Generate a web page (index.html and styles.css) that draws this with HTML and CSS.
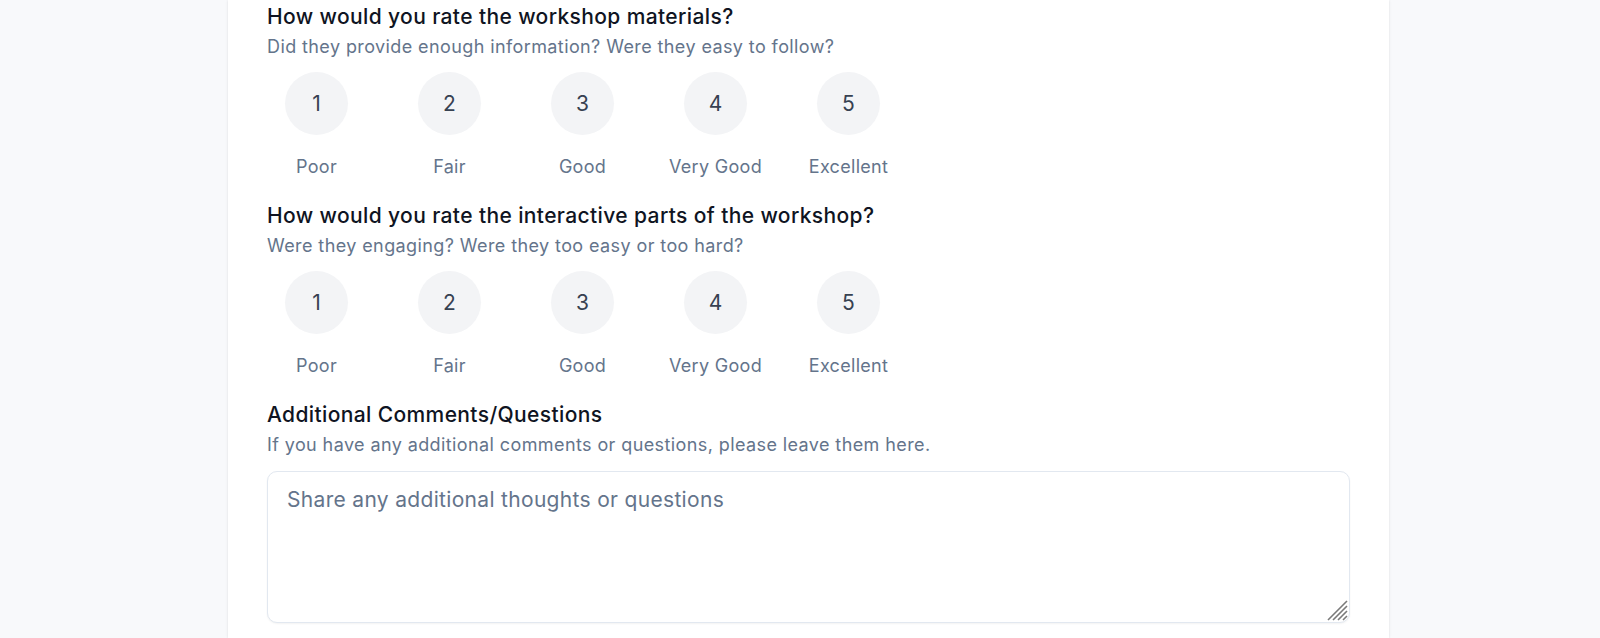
FILE: index.html
```html
<!DOCTYPE html>
<html lang="en">
<head>
<meta charset="utf-8">
<title>Workshop Feedback</title>
<link rel="stylesheet" href="styles.css">
</head>
<body>
<main class="card">
  <section class="question">
    <h2 class="q-title">How would you rate the workshop materials?</h2>
    <p class="q-desc">Did they provide enough information? Were they easy to follow?</p>
    <div class="scale">
      <label class="opt"><span class="circle">1</span><span class="opt-label">Poor</span></label>
      <label class="opt"><span class="circle">2</span><span class="opt-label">Fair</span></label>
      <label class="opt"><span class="circle">3</span><span class="opt-label">Good</span></label>
      <label class="opt"><span class="circle">4</span><span class="opt-label">Very Good</span></label>
      <label class="opt"><span class="circle">5</span><span class="opt-label">Excellent</span></label>
    </div>
  </section>
  <section class="question">
    <h2 class="q-title">How would you rate the interactive parts of the workshop?</h2>
    <p class="q-desc">Were they engaging? Were they too easy or too hard?</p>
    <div class="scale">
      <label class="opt"><span class="circle">1</span><span class="opt-label">Poor</span></label>
      <label class="opt"><span class="circle">2</span><span class="opt-label">Fair</span></label>
      <label class="opt"><span class="circle">3</span><span class="opt-label">Good</span></label>
      <label class="opt"><span class="circle">4</span><span class="opt-label">Very Good</span></label>
      <label class="opt"><span class="circle">5</span><span class="opt-label">Excellent</span></label>
    </div>
  </section>
  <section class="question">
    <h2 class="q-title">Additional Comments/Questions</h2>
    <p class="q-desc">If you have any additional comments or questions, please leave them here.</p>
    <div class="comments-wrap">
      <textarea class="comments" placeholder="Share any additional thoughts or questions"></textarea>
      <svg class="grip" width="21" height="21" viewBox="0 0 21 21" aria-hidden="true">
        <path d="M1 20 L20 1 M6 20 L20 6 M11 20 L20 11 M16 20 L20 16" stroke="#7a7a7a" stroke-width="1.6" fill="none"/>
      </svg>
    </div>
  </section>
</main>
</body>
</html>
```

FILE: styles.css
```css
* { box-sizing: border-box; }
html, body { margin: 0; padding: 0; }
body {
  background: #f8f9fb;
  font-family: Inter, "Noto Sans", sans-serif;
  height: 638px;
  overflow: hidden;
}
.card {
  margin-left: 228px;
  width: 1161px;
  min-height: 638px;
  background: #ffffff;
  box-shadow: 0 0 3px rgba(0, 0, 0, 0.08), 0 1px 2px rgba(0, 0, 0, 0.04);
  padding: 3px 39px 0;
}
.question { margin-bottom: 22px; }
.q-title {
  margin: 0;
  font-size: 21px;
  line-height: 28px;
  font-weight: 500;
  letter-spacing: 0.38px;
  color: #0f1422;
}
.q-desc {
  margin: 3px 0 0;
  font-size: 18px;
  line-height: 26px;
  letter-spacing: 0.4px;
  color: #64748b;
}
.scale {
  display: flex;
  gap: 34px;
  margin-top: 12px;
}
.opt {
  width: 99px;
  display: flex;
  flex-direction: column;
  align-items: center;
}
.circle {
  width: 63px;
  height: 63px;
  border-radius: 50%;
  background: #f3f4f6;
  color: #374151;
  font-size: 21px;
  display: flex;
  align-items: center;
  justify-content: center;
}
.opt-label {
  margin-top: 19px;
  font-size: 18px;
  line-height: 26px;
  letter-spacing: 0.3px;
  color: #64748b;
  white-space: nowrap;
}
.comments-wrap {
  position: relative;
  margin-top: 13px;
}
.comments {
  display: block;
  width: 100%;
  height: 152px;
  border: 1px solid #e2e8f0;
  border-radius: 10px;
  padding: 14px 19px;
  font-family: inherit;
  font-size: 21px;
  line-height: 28px;
  letter-spacing: 0.32px;
  color: #111827;
  box-shadow: 0 1px 2px rgba(0, 0, 0, 0.05);
  resize: none;
  outline: none;
}
.comments::placeholder { color: #64748b; }
.grip {
  position: absolute;
  right: 2px;
  bottom: 2px;
  pointer-events: none;
}
```
